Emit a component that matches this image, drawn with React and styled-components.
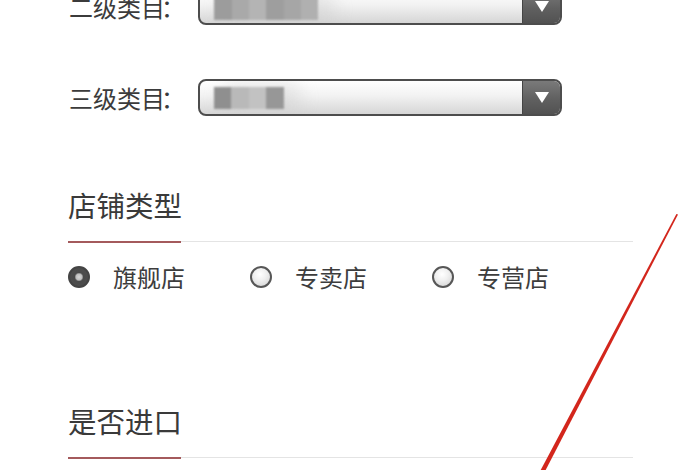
import React from 'react';
import styled, { createGlobalStyle } from 'styled-components';

const GlobalStyle = createGlobalStyle`
  html, body {
    margin: 0;
    padding: 0;
    background: #ffffff;
    overflow: hidden;
  }
  body {
    font-family: "Noto Sans CJK SC", "Noto Sans", sans-serif;
    color: #3b3b3b;
  }
`;

const Page = styled.div`
  position: relative;
  width: 700px;
  height: 470px;
  overflow: hidden;
`;

const Form = styled.div`
  display: flex;
  flex-direction: column;
  padding-left: 68px;
  margin-top: -12px;
  width: 565px;
`;

const FieldRow = styled.div`
  display: flex;
  align-items: center;
  margin-top: ${p => p.$gap || 0}px;
`;

const Label = styled.span`
  width: 129px;
  padding-left: 1px;
  font-size: 24px;
  line-height: 1;
  white-space: nowrap;
`;

const Colon = styled.span`
  display: inline-block;
  margin-left: -4px;
`;

const Select = styled.div`
  display: flex;
  width: 364px;
  height: 37px;
  box-sizing: border-box;
  border: 2px solid #4d4d4d;
  border-radius: 8px;
  overflow: hidden;
  background: linear-gradient(to bottom, #ffffff 0%, #f2f2f2 45%, #d6d6d6 100%);
`;

const SelectValue = styled.div`
  flex: 1;
  display: flex;
  align-items: center;
  padding-left: 14px;
`;

const Mosaic = styled.div`
  display: flex;
  height: ${p => p.$h}px;
  margin-top: ${p => p.$top || 0}px;
  filter: blur(1.2px);
  border-radius: 10px;
  box-shadow: 12px 0 16px 6px rgba(200, 200, 200, 0.35);
`;

const Cell = styled.div`
  width: ${p => p.$w}px;
  background: ${p => p.$c};
`;

const SelectButton = styled.div`
  width: 37px;
  display: flex;
  align-items: center;
  justify-content: center;
  background: linear-gradient(to bottom, #7a7a7a 0%, #606060 55%, #525252 100%);
  border-left: 1px solid #444;
`;

const Triangle = styled.div`
  width: 0;
  height: 0;
  border-left: 7px solid transparent;
  border-right: 7px solid transparent;
  border-top: 11px solid #ffffff;
`;

const SectionHeader = styled.div`
  margin-top: ${p => p.$gap}px;
  border-bottom: 1.5px solid #e4e4e4;
  display: flex;
`;

const SectionTitle = styled.h3`
  margin: 0 0 -2px;
  width: 113px;
  padding-bottom: 23px;
  font-size: 28.5px;
  font-weight: 400;
  line-height: 27px;
  color: #3a3a3a;
  border-bottom: 2.5px solid #a45a5c;
  white-space: nowrap;
`;

const RadioGroup = styled.div`
  display: flex;
  align-items: center;
  gap: 65px;
  margin-top: 22px;
  height: 26px;
`;

const RadioOption = styled.label`
  display: flex;
  align-items: center;
  gap: 23px;
  font-size: 24px;
  line-height: 1;
  color: #3d3d3d;
`;

const RadioDot = styled.span`
  width: 22px;
  height: 22px;
  box-sizing: border-box;
  border-radius: 50%;
  display: flex;
  align-items: center;
  justify-content: center;
  border: 2px solid ${p => (p.$checked ? '#444' : '#575757')};
  background: ${p =>
    p.$checked
      ? 'radial-gradient(circle at 50% 50%, #d8d8d8 0, #bdbdbd 3px, #4a4a4a 4.5px, #505050 100%)'
      : 'radial-gradient(circle at 45% 35%, #ffffff 0%, #f0f0f0 40%, #cfcfcf 100%)'};
`;

const Annotation = styled.svg`
  position: absolute;
  left: 0;
  top: 0;
  pointer-events: none;
`;

const options = [
  { label: '旗舰店', checked: true },
  { label: '专卖店', checked: false },
  { label: '专营店', checked: false },
];

export default function App() {
  return (
    <Page>
      <GlobalStyle />
      <Form>
        <FieldRow>
          <Label>二级类目<Colon>：</Colon></Label>
          <Select>
            <SelectValue>
              <Mosaic $h={22} $top={4}>
                <Cell $w={18} $c="#9c9c9c" />
                <Cell $w={17} $c="#a9a9a9" />
                <Cell $w={17} $c="#b4b4b4" />
                <Cell $w={18} $c="#9e9e9e" />
                <Cell $w={17} $c="#a6a6a6" />
                <Cell $w={17} $c="#b0b0b0" />
              </Mosaic>
            </SelectValue>
            <SelectButton>
              <Triangle />
            </SelectButton>
          </Select>
        </FieldRow>

        <FieldRow $gap={54}>
          <Label>三级类目<Colon>：</Colon></Label>
          <Select>
            <SelectValue>
              <Mosaic $h={22}>
                <Cell $w={17} $c="#8f8f8f" />
                <Cell $w={18} $c="#b9b9b9" />
                <Cell $w={17} $c="#c2c2c2" />
                <Cell $w={18} $c="#979797" />
              </Mosaic>
            </SelectValue>
            <SelectButton>
              <Triangle />
            </SelectButton>
          </Select>
        </FieldRow>

        <SectionHeader $gap={75}>
          <SectionTitle>店铺类型</SectionTitle>
        </SectionHeader>

        <RadioGroup>
          {options.map(o => (
            <RadioOption key={o.label}>
              <RadioDot $checked={o.checked} />
              {o.label}
            </RadioOption>
          ))}
        </RadioGroup>

        <SectionHeader $gap={117}>
          <SectionTitle>是否进口</SectionTitle>
        </SectionHeader>
      </Form>

      <Annotation width="700" height="470" viewBox="0 0 700 470">
        <polygon points="676.4,214 678,214.4 543.6,474 538.6,474" fill="#d3261c" />
      </Annotation>
    </Page>
  );
}
